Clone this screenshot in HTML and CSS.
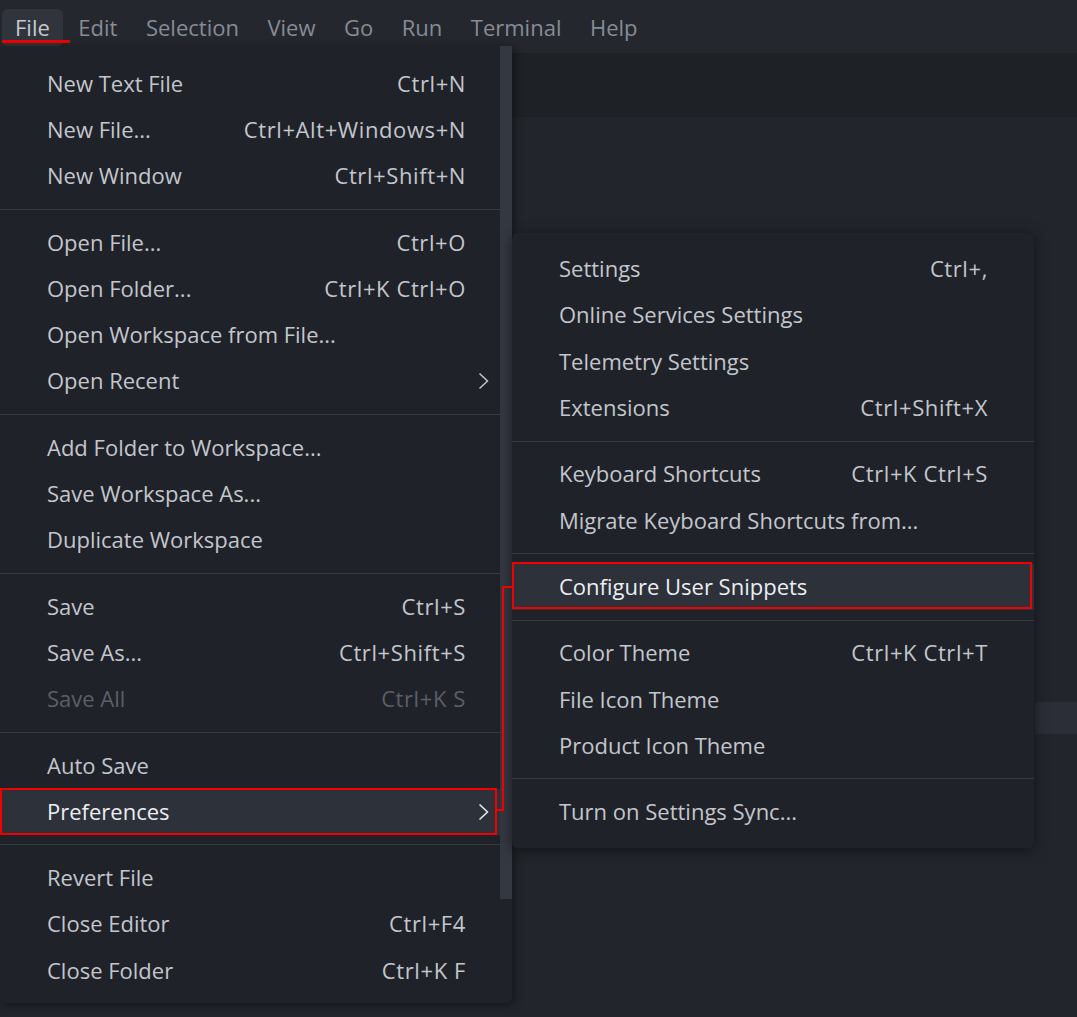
FILE: index.html
```html
<!DOCTYPE html>
<html lang="en">
<head>
<meta charset="utf-8">
<title>File menu</title>
<link rel="stylesheet" href="styles.css">
</head>
<body>
<header class="titlebar">
  <nav class="menubar">
    <span class="mb-item active">File</span>
    <span class="mb-item">Edit</span>
    <span class="mb-item">Selection</span>
    <span class="mb-item">View</span>
    <span class="mb-item">Go</span>
    <span class="mb-item">Run</span>
    <span class="mb-item">Terminal</span>
    <span class="mb-item">Help</span>
  </nav>
  <div class="file-underline"></div>
</header>
<div class="tabs"></div>
<main class="editor">
  <div class="editor-widget"></div>
</main>

<div class="menu main-menu">
  <div class="item"><span class="label">New Text File</span><span class="key">Ctrl+N</span><span class="sub"></span></div>
  <div class="item"><span class="label">New File...</span><span class="key">Ctrl+Alt+Windows+N</span><span class="sub"></span></div>
  <div class="item"><span class="label">New Window</span><span class="key">Ctrl+Shift+N</span><span class="sub"></span></div>
  <div class="sep"></div>
  <div class="item"><span class="label">Open File...</span><span class="key">Ctrl+O</span><span class="sub"></span></div>
  <div class="item"><span class="label">Open Folder...</span><span class="key">Ctrl+K Ctrl+O</span><span class="sub"></span></div>
  <div class="item"><span class="label">Open Workspace from File...</span><span class="key"></span><span class="sub"></span></div>
  <div class="item"><span class="label">Open Recent</span><span class="key"></span><span class="sub"><svg class="chev" viewBox="0 0 11 18"><polyline points="1.5,1.5 9.5,9 1.5,16.5"/></svg></span></div>
  <div class="sep"></div>
  <div class="item"><span class="label">Add Folder to Workspace...</span><span class="key"></span><span class="sub"></span></div>
  <div class="item"><span class="label">Save Workspace As...</span><span class="key"></span><span class="sub"></span></div>
  <div class="item"><span class="label">Duplicate Workspace</span><span class="key"></span><span class="sub"></span></div>
  <div class="sep"></div>
  <div class="item"><span class="label">Save</span><span class="key">Ctrl+S</span><span class="sub"></span></div>
  <div class="item"><span class="label">Save As...</span><span class="key">Ctrl+Shift+S</span><span class="sub"></span></div>
  <div class="item disabled"><span class="label">Save All</span><span class="key">Ctrl+K S</span><span class="sub"></span></div>
  <div class="sep"></div>
  <div class="item"><span class="label">Auto Save</span><span class="key"></span><span class="sub"></span></div>
  <div class="item selected marked-main"><span class="label">Preferences</span><span class="key"></span><span class="sub"><svg class="chev" viewBox="0 0 11 18"><polyline points="1.5,1.5 9.5,9 1.5,16.5"/></svg></span></div>
  <div class="sep"></div>
  <div class="item"><span class="label">Revert File</span><span class="key"></span><span class="sub"></span></div>
  <div class="item"><span class="label">Close Editor</span><span class="key">Ctrl+F4</span><span class="sub"></span></div>
  <div class="item"><span class="label">Close Folder</span><span class="key">Ctrl+K F</span><span class="sub"></span></div>
  <div class="scrollbar"></div>
</div>

<div class="menu sub-menu">
  <div class="item"><span class="label">Settings</span><span class="key">Ctrl+,</span><span class="sub"></span></div>
  <div class="item"><span class="label">Online Services Settings</span><span class="key"></span><span class="sub"></span></div>
  <div class="item"><span class="label">Telemetry Settings</span><span class="key"></span><span class="sub"></span></div>
  <div class="item"><span class="label">Extensions</span><span class="key">Ctrl+Shift+X</span><span class="sub"></span></div>
  <div class="sep"></div>
  <div class="item"><span class="label">Keyboard Shortcuts</span><span class="key">Ctrl+K Ctrl+S</span><span class="sub"></span></div>
  <div class="item"><span class="label">Migrate Keyboard Shortcuts from...</span><span class="key"></span><span class="sub"></span></div>
  <div class="sep"></div>
  <div class="item selected marked-sub"><span class="label">Configure User Snippets</span><span class="key"></span><span class="sub"></span></div>
  <div class="sep"></div>
  <div class="item"><span class="label">Color Theme</span><span class="key">Ctrl+K Ctrl+T</span><span class="sub"></span></div>
  <div class="item"><span class="label">File Icon Theme</span><span class="key"></span><span class="sub"></span></div>
  <div class="item"><span class="label">Product Icon Theme</span><span class="key"></span><span class="sub"></span></div>
  <div class="sep"></div>
  <div class="item"><span class="label">Turn on Settings Sync...</span><span class="key"></span><span class="sub"></span></div>
</div>

<div class="connector-v"></div>
<div class="connector-h"></div>
</body>
</html>
```

FILE: styles.css
```css
* { box-sizing: border-box; }

html, body {
  margin: 0;
  padding: 0;
  height: 100%;
  overflow: hidden;
}

body {
  background: #22252c;
  font-family: "Open Sans", "Noto Sans", sans-serif;
  font-size: 22px;
  color: #c3c6cd;
  display: flex;
  flex-direction: column;
  position: relative;
}

.titlebar {
  height: 53px;
  flex: none;
  background: #24272e;
  position: relative;
}

.menubar {
  display: flex;
  align-items: center;
  height: 53px;
  padding-top: 2px;
}

.mb-item {
  margin: 0 0.5px 0 2px;
  padding: 0 13px;
  height: 37px;
  line-height: 37px;
  border-radius: 6px;
  color: #878c95;
}

.mb-item.active {
  background: #30343c;
  color: #c6c9d0;
}

.file-underline {
  position: absolute;
  left: 2px;
  top: 40px;
  width: 68px;
  height: 3px;
  background: #f20000;
}

.tabs {
  height: 64px;
  flex: none;
  background: #1e2126;
}

.editor {
  flex: 1;
  display: flex;
  flex-direction: column;
  align-items: flex-end;
  background: #22252c;
}

.editor-widget {
  margin-top: 585px;
  width: 42px;
  height: 32px;
  background: #2b2e37;
}

/* menus */
.menu {
  position: absolute;
  background: #1f2228;
  display: flex;
  flex-direction: column;
}

.main-menu {
  left: 0;
  top: 46px;
  width: 512px;
  padding: 14.5px 0 9px;
  border-radius: 0 0 6px 6px;
  box-shadow: 2px 2px 10px rgba(0, 0, 0, 0.45);
}

.sub-menu {
  left: 512px;
  top: 233px;
  width: 522px;
  padding: 13px 0 13px;
  border-radius: 6px;
  box-shadow: 0 2px 14px rgba(0, 0, 0, 0.5);
}

.item {
  height: 46.3px;
  flex: none;
  display: flex;
  align-items: center;
  padding-left: 47px;
  padding-bottom: 2px;
  white-space: nowrap;
  position: relative;
}

.label {
  flex: 1;
}

.key {
  color: #c3c6cd;
  letter-spacing: 0.6px;
}

.sub {
  width: 46px;
  flex: none;
  display: flex;
  align-items: center;
  padding-left: 12px;
  padding-top: 2px;
}

.chev {
  width: 11px;
  height: 18px;
  fill: none;
  stroke: #c3c6cd;
  stroke-width: 1.5;
}

.item.disabled .label,
.item.disabled .key {
  color: #5b5f67;
}

.item.selected {
  background: #2d313a;
  color: #eceef2;
}

.item.selected .chev {
  stroke: #eceef2;
}

.sep {
  height: 20px;
  flex: none;
  display: flex;
  align-items: center;
}

.sep::before {
  content: "";
  display: block;
  width: 100%;
  height: 1px;
  background: #383b44;
}

.scrollbar {
  position: absolute;
  right: 0;
  top: 0;
  width: 12px;
  height: 853px;
  background: #343841;
}

/* annotation boxes */
.marked-main::after {
  content: "";
  position: absolute;
  left: 0;
  top: -1px;
  right: 15px;
  bottom: 0;
  border: 2px solid #f20000;
}

.marked-sub::after {
  content: "";
  position: absolute;
  left: 0;
  top: -2px;
  right: 2px;
  bottom: 1px;
  border: 2px solid #f20000;
}

.connector-v {
  position: absolute;
  left: 502px;
  top: 586px;
  width: 11px;
  height: 225px;
  border-left: 2px solid #f20000;
  border-top: 2px solid #f20000;
}

.connector-h {
  position: absolute;
  left: 496px;
  top: 809px;
  width: 8px;
  height: 2px;
  background: #f20000;
}
```
